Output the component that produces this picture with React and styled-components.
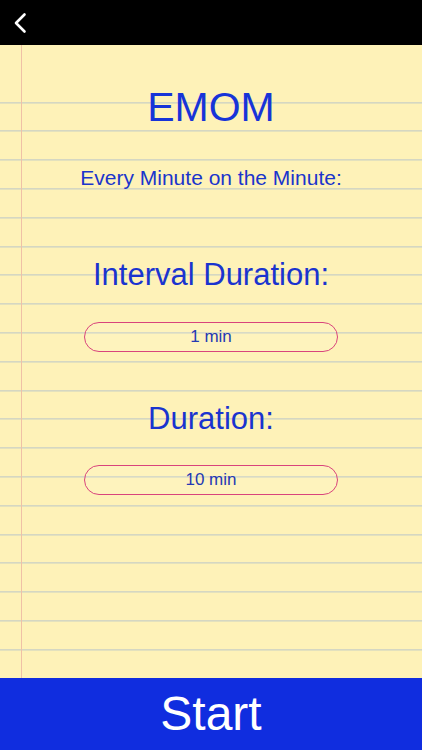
import React, { useState } from 'react';
import styled, { createGlobalStyle } from 'styled-components';

const GlobalStyle = createGlobalStyle`
  html, body {
    margin: 0;
    padding: 0;
    height: 100%;
  }
  body {
    font-family: "Liberation Sans", Arial, sans-serif;
    background: #000;
  }
  #root {
    height: 100%;
  }
`;

const Screen = styled.div`
  height: 100vh;
  display: flex;
  flex-direction: column;
`;

const TopBar = styled.header`
  height: 45px;
  flex: none;
  background: #000;
  display: flex;
  align-items: center;
  padding-left: 9px;
`;

const BackButton = styled.button`
  background: none;
  border: none;
  padding: 0;
  width: 22px;
  height: 28px;
  display: flex;
  align-items: center;
  justify-content: center;
  cursor: pointer;
`;

const Paper = styled.main`
  flex: 1;
  position: relative;
  display: flex;
  flex-direction: column;
  align-items: center;
  padding-top: 41.6px;
  background-color: #fef2b8;
  background-image:
    linear-gradient(#fef2b8, #fef2b8),
    repeating-linear-gradient(
      to bottom,
      transparent 0,
      transparent 27.8px,
      #bac6c8 27.8px,
      #bac6c8 28.8px
    );
  background-size: 100% 44px, 100% 100%;
  background-repeat: no-repeat, repeat;
  background-position: 0 0, 0 0.4px;
  overflow: hidden;

  &::before {
    content: '';
    position: absolute;
    top: 0;
    bottom: 0;
    left: 21px;
    width: 1px;
    background: #efc1a6;
  }
`;

const Title = styled.h1`
  margin: 0;
  font-size: 41px;
  line-height: 1;
  font-weight: 400;
  color: #1734d8;
`;

const Subtitle = styled.p`
  margin: 39.7px 0 0;
  font-size: 21px;
  line-height: 1;
  color: #1a35cc;
`;

const Label = styled.h2`
  margin: ${p => p.$gap}px 0 0;
  font-size: 31px;
  line-height: 1;
  font-weight: 400;
  color: #1a34cf;
`;

const Field = styled.input`
  box-sizing: border-box;
  margin-top: ${p => p.$gap}px;
  width: 254px;
  height: 30px;
  border: 1.5px solid #d9447c;
  border-radius: 15px;
  background: rgba(255, 255, 255, 0.08);
  text-align: center;
  font-family: "Liberation Sans", Arial, sans-serif;
  font-size: 17px;
  color: #2539b4;
  outline: none;
  padding: 0;
`;

const StartButton = styled.button`
  height: 72px;
  flex: none;
  border: none;
  background: #102ddf;
  color: #fff;
  font-family: "Liberation Sans", Arial, sans-serif;
  font-size: 48px;
  line-height: 1;
  cursor: pointer;
`;

export default function App() {
  const [interval, setInterval] = useState('1 min');
  const [duration, setDuration] = useState('10 min');

  return (
    <Screen>
      <GlobalStyle />
      <TopBar>
        <BackButton aria-label="Back">
          <svg width="16" height="22" viewBox="0 0 16 22" fill="none">
            <path d="M12.5 2.5 L4 11 L12.5 19.5" stroke="#fff" strokeWidth="2.6" strokeLinecap="round" strokeLinejoin="round" />
          </svg>
        </BackButton>
      </TopBar>
      <Paper>
        <Title>EMOM</Title>
        <Subtitle>Every Minute on the Minute:</Subtitle>
        <Label $gap={70.7}>Interval Duration:</Label>
        <Field $gap={32} value={interval} onChange={e => setInterval(e.target.value)} />
        <Label $gap={50.7}>Duration:</Label>
        <Field $gap={31.3} value={duration} onChange={e => setDuration(e.target.value)} />
      </Paper>
      <StartButton>Start</StartButton>
    </Screen>
  );
}
